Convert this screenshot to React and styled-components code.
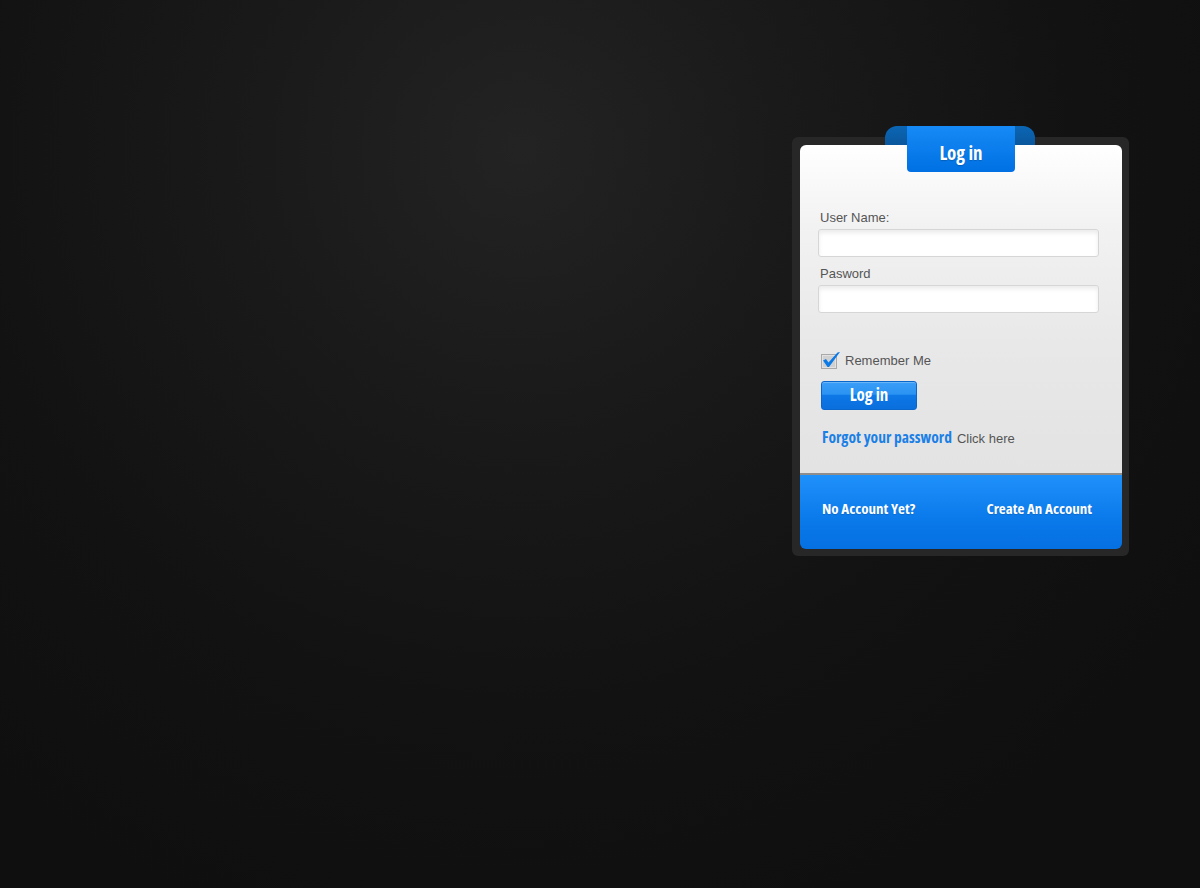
import React from 'react';
import styled, { createGlobalStyle } from 'styled-components';

const GlobalStyle = createGlobalStyle`
  html, body {
    margin: 0;
    padding: 0;
    background: #0f0f0f;
  }
`;

const condensed = `"Open Sans", "DejaVu Sans", sans-serif`;

const Page = styled.div`
  width: 1200px;
  height: 888px;
  box-sizing: border-box;
  display: flex;
  justify-content: flex-end;
  align-items: flex-start;
  padding: 137px 71px 0 0;
  background: radial-gradient(circle at 520px 150px, #232323 0, #1a1a1a 260px, #121212 560px, #0f0f0f 820px);
  font-family: "Liberation Sans", Arial, sans-serif;
`;

const Frame = styled.div`
  position: relative;
  width: 322px;
  padding: 8px 7px 7px 8px;
  background: #272727;
  border-radius: 6px;
`;

const RibbonBack = styled.div`
  position: absolute;
  top: -11px;
  left: 93px;
  width: 150px;
  height: 24px;
  border-radius: 12px 12px 0 0;
  background: linear-gradient(#0b66b5, #0a5396);
`;

const RibbonFront = styled.div`
  position: absolute;
  top: -11px;
  left: 115px;
  width: 108px;
  height: 46px;
  z-index: 2;
  display: flex;
  align-items: center;
  justify-content: center;
  padding-top: 8px;
  box-sizing: border-box;
  border-radius: 0 0 4px 4px;
  background: linear-gradient(#168af6, #0070e2);
  color: #fff;
  font-family: ${condensed};
  font-stretch: 75%;
  font-weight: bold;
  font-size: 19px;
  text-shadow: 0 1px 1px rgba(0, 0, 0, 0.2);
`;

const Card = styled.div`
  position: relative;
  z-index: 1;
  border-radius: 6px;
  overflow: hidden;
`;

const Body = styled.div`
  height: 330px;
  box-sizing: border-box;
  padding: 64px 0 0 18px;
  background: linear-gradient(#ffffff 0, #f2f2f2 80px, #e8e8e8 200px, #e3e3e3 328px);
  border-bottom: 2px solid #8e8e8e;
`;

const Label = styled.div`
  margin: ${p => p.$top || 0}px 0 3px 2px;
  font-size: 13px;
  line-height: 17px;
  color: #555;
`;

const Input = styled.input`
  display: block;
  width: 281px;
  height: 28px;
  box-sizing: border-box;
  margin: 0;
  border: 1px solid #d6d6d6;
  border-radius: 3px;
  background: #fff;
  box-shadow: inset 0 3px 4px rgba(0, 0, 0, 0.08);
  outline: none;
  font-size: 13px;
  padding: 0 6px;
`;

const CheckRow = styled.label`
  display: flex;
  align-items: center;
  gap: 4px;
  margin: 37px 0 0 3px;
  height: 20px;
  font-size: 13px;
  color: #555;
`;

const Button = styled.button`
  display: block;
  margin: 11px 0 0 3px;
  width: 96px;
  height: 29px;
  padding: 0 0 2px;
  border: 1px solid #0b66cc;
  border-radius: 3px;
  background: linear-gradient(#3a9ef7 0, #2b93f3 45%, #0d78e6 50%, #0a6fdd 100%);
  color: #fff;
  font-family: ${condensed};
  font-stretch: 75%;
  font-weight: bold;
  font-size: 17px;
  cursor: pointer;
  box-shadow: inset 0 1px 0 rgba(255, 255, 255, 0.25);
`;

const ForgotRow = styled.div`
  display: flex;
  align-items: baseline;
  gap: 5px;
  margin: 17px 0 0 4px;
  line-height: 20px;
`;

const ForgotLink = styled.a`
  font-family: ${condensed};
  font-stretch: 75%;
  font-weight: bold;
  font-size: 15.5px;
  color: #1a80e6;
  text-decoration: none;
`;

const Muted = styled.span`
  font-size: 13px;
  color: #555;
`;

const Footer = styled.div`
  height: 74px;
  box-sizing: border-box;
  display: flex;
  align-items: center;
  justify-content: space-between;
  padding: 0 30px 8px 22px;
  background: linear-gradient(#1f91fb, #0a79ea 60%, #0570e2);
  color: #fff;
  font-family: ${condensed};
  font-stretch: 75%;
  font-weight: bold;
  font-size: 15px;
  text-shadow: 0 1px 1px rgba(0, 0, 0, 0.15);
`;

const FooterLink = styled.a`
  color: #fff;
  text-decoration: none;
`;

const CheckIcon = () => (
  <svg width="20" height="18" viewBox="0 0 20 18">
    <rect x="0.5" y="3.5" width="15" height="14" fill="#e2e2e2" stroke="#a9a9a9" />
    <rect x="2" y="5" width="12" height="11" fill="#d0d0d0" />
    <path d="M2 9.5 L5 8 L7.5 11.5 L16.5 1.5 L19 1 L8 16 L6.5 16 Z" fill="#0b7ae6" />
  </svg>
);

export default function App() {
  return (
    <>
      <GlobalStyle />
      <Page>
        <Frame>
          <RibbonBack />
          <RibbonFront>Log in</RibbonFront>
          <Card>
            <Body>
              <Label>User Name:</Label>
              <Input type="text" />
              <Label $top={8}>Pasword</Label>
              <Input type="password" />
              <CheckRow>
                <CheckIcon />
                Remember Me
              </CheckRow>
              <Button type="button">Log in</Button>
              <ForgotRow>
                <ForgotLink href="#">Forgot your password</ForgotLink>
                <Muted>Click here</Muted>
              </ForgotRow>
            </Body>
            <Footer>
              <span>No Account Yet?</span>
              <FooterLink href="#">Create An Account</FooterLink>
            </Footer>
          </Card>
        </Frame>
      </Page>
    </>
  );
}
